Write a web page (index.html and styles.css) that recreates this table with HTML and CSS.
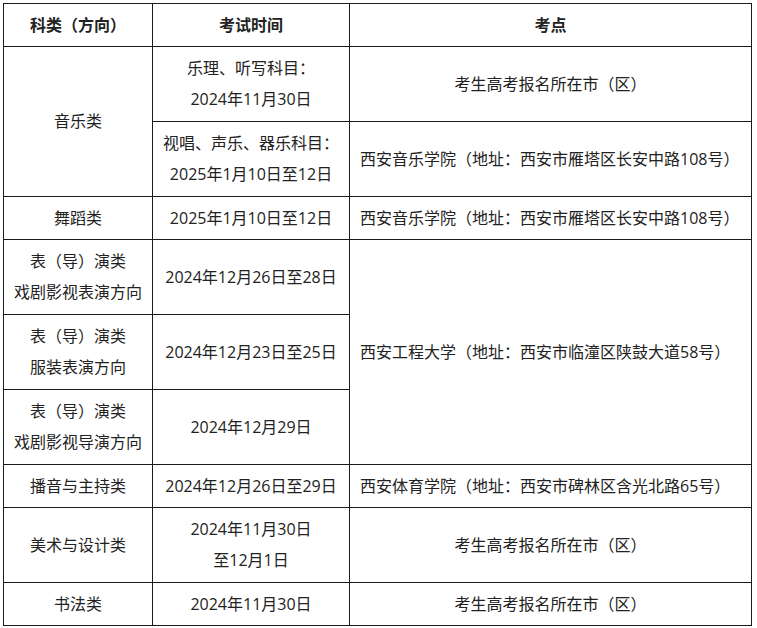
FILE: index.html
```html
<!DOCTYPE html>
<html lang="zh-CN">
<head>
<meta charset="utf-8">
<title>考试安排</title>
<link rel="stylesheet" href="styles.css">
</head>
<body>
<table class="exam">
  <colgroup>
    <col class="c1">
    <col class="c2">
    <col class="c3">
  </colgroup>
  <thead>
    <tr class="r1">
      <th>科类（方向）</th>
      <th>考试时间</th>
      <th>考点</th>
    </tr>
  </thead>
  <tbody>
    <tr class="r2">
      <td rowspan="2">音乐类</td>
      <td>乐理、听写科目：<br>2024年11月30日</td>
      <td>考生高考报名所在市（区）</td>
    </tr>
    <tr class="r2">
      <td>视唱、声乐、器乐科目：<br>2025年1月10日至12日</td>
      <td class="left">西安音乐学院（地址：西安市雁塔区长安中路108号）</td>
    </tr>
    <tr class="r1">
      <td>舞蹈类</td>
      <td>2025年1月10日至12日</td>
      <td class="left">西安音乐学院（地址：西安市雁塔区长安中路108号）</td>
    </tr>
    <tr class="r2">
      <td>表（导）演类<br>戏剧影视表演方向</td>
      <td>2024年12月26日至28日</td>
      <td class="left" rowspan="3">西安工程大学（地址：西安市临潼区陕鼓大道58号）</td>
    </tr>
    <tr class="r2">
      <td>表（导）演类<br>服装表演方向</td>
      <td>2024年12月23日至25日</td>
    </tr>
    <tr class="r2">
      <td>表（导）演类<br>戏剧影视导演方向</td>
      <td>2024年12月29日</td>
    </tr>
    <tr class="r1">
      <td>播音与主持类</td>
      <td>2024年12月26日至29日</td>
      <td class="left">西安体育学院（地址：西安市碑林区含光北路65号）</td>
    </tr>
    <tr class="r2">
      <td>美术与设计类</td>
      <td>2024年11月30日<br>至12月1日</td>
      <td>考生高考报名所在市（区）</td>
    </tr>
    <tr class="r1">
      <td>书法类</td>
      <td>2024年11月30日</td>
      <td>考生高考报名所在市（区）</td>
    </tr>
  </tbody>
</table>
</body>
</html>
```

FILE: styles.css
```css
html, body {
  margin: 0;
  padding: 0;
  background: #ffffff;
}

body {
  padding: 3px;
  font-family: "Open Sans", "Noto Sans CJK SC", sans-serif;
  font-size: 16px;
  color: #222222;
}

.exam {
  border-collapse: collapse;
  table-layout: fixed;
  width: 749px;
}

.c1 { width: 149px; }
.c2 { width: 197px; }
.c3 { width: 402px; }

.exam th,
.exam td {
  border: 1px solid #1a1a1a;
  padding: 0 10px;
  text-align: center;
  vertical-align: middle;
  line-height: 31px;
  white-space: nowrap;
}

.exam th {
  font-weight: 700;
  color: #222222;
}

.exam td.left {
  text-align: left;
}

.r1 { height: 43px; }
.r2 { height: 75px; }
```
